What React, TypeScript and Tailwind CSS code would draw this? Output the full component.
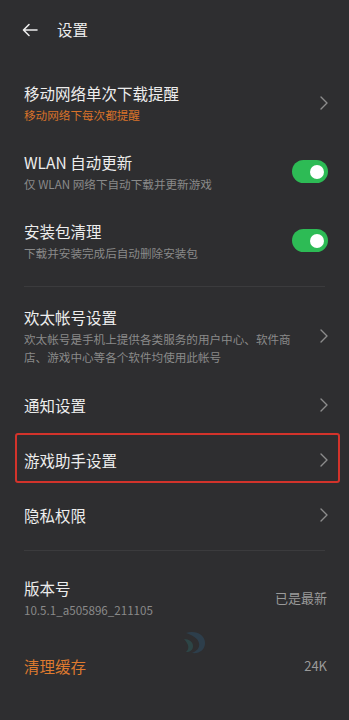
import React from "react";

const Chevron = () => (
  <svg width="10" height="16" viewBox="0 0 10 16" className="shrink-0">
    <path d="M2 2l6 6-6 6" fill="none" stroke="#8c8c8c" strokeWidth="1.4" strokeLinecap="round" strokeLinejoin="round" />
  </svg>
);

const Toggle = () => (
  <div className="w-[36px] h-[23px] rounded-full bg-[#2dbb55] flex items-center justify-end pr-[4px] shrink-0">
    <div className="w-[14px] h-[14px] rounded-full bg-white" />
  </div>
);

const Title = ({ children, orange }: { children: React.ReactNode; orange?: boolean }) => (
  <div className={`text-[15.5px] leading-[22px] ${orange ? "text-[#de7a2f]" : "text-[#ededed]"}`}>{children}</div>
);

const Sub = ({ children, orange }: { children: React.ReactNode; orange?: boolean }) => (
  <div className={`mt-[2px] text-[11.6px] leading-[18px] ${orange ? "text-[#d8722a]" : "text-[#8a8a8a]"}`}>{children}</div>
);

export default function App() {
  return (
    <div
      className="w-[349px] h-[720px] bg-[#2e2e30] overflow-hidden"
      style={{ fontFamily: '"Noto Sans CJK SC", "Noto Sans", sans-serif' }}
    >
      {/* header */}
      <div className="h-[60px] flex items-center pl-[22px]">
        <svg width="16" height="14" viewBox="0 0 16 14">
          <path d="M15 7H2M7 1.5L1.5 7 7 12.5" fill="none" stroke="#ececec" strokeWidth="1.6" strokeLinecap="round" strokeLinejoin="round" />
        </svg>
        <span className="ml-[19px] text-[15.5px] text-[#ececec]">设置</span>
      </div>

      <div className="mt-[8px]">
        <div className="h-[69px] flex items-center pl-[24px] pr-[20px]">
          <div className="flex-1">
            <Title>移动网络单次下载提醒</Title>
            <Sub orange>移动网络下每次都提醒</Sub>
          </div>
          <Chevron />
        </div>

        <div className="h-[69px] flex items-center pl-[24px] pr-[21px]">
          <div className="flex-1">
            <Title>WLAN 自动更新</Title>
            <Sub>仅 WLAN 网络下自动下载并更新游戏</Sub>
          </div>
          <Toggle />
        </div>

        <div className="h-[69px] flex items-center pl-[24px] pr-[21px]">
          <div className="flex-1">
            <Title>安装包清理</Title>
            <Sub>下载并安装完成后自动删除安装包</Sub>
          </div>
          <Toggle />
        </div>
      </div>

      <div className="mt-[11px] mx-[24px] h-px bg-[#3b3b3d]" />

      <div className="flex items-center pl-[24px] pr-[20px] pt-[19px] pb-[11px]">
        <div className="flex-1 pr-[20px]">
          <Title>欢太帐号设置</Title>
          <Sub>欢太帐号是手机上提供各类服务的用户中心、软件商店、游戏中心等各个软件均使用此帐号</Sub>
        </div>
        <Chevron />
      </div>

      <div className="h-[55px] flex items-center pl-[24px] pr-[20px]">
        <div className="flex-1">
          <Title>通知设置</Title>
        </div>
        <Chevron />
      </div>

      <div className="relative h-[55px] flex items-center pl-[24px] pr-[20px]">
        <div className="absolute left-[15px] right-[9px] top-[1px] bottom-[4px] border-2 border-[#d3332b] rounded-[3px]" />
        <div className="flex-1">
          <Title>游戏助手设置</Title>
        </div>
        <Chevron />
      </div>

      <div className="h-[55px] flex items-center pl-[24px] pr-[20px]">
        <div className="flex-1">
          <Title>隐私权限</Title>
        </div>
        <Chevron />
      </div>

      <div className="mt-[8px] mx-[24px] h-px bg-[#3b3b3d]" />

      <div className="relative h-[94px] flex items-center pl-[24px] pr-[22px]">
        <div className="flex-1">
          <Title>版本号</Title>
          <Sub>10.5.1_a505896_211105</Sub>
        </div>
        <span className="text-[13px] text-[#9a9a9a]">已是最新</span>
      </div>

      <div className="relative h-[42px] flex items-center pl-[24px] pr-[22px]">
        <svg className="absolute left-[180px] top-[-18px] opacity-20" width="30" height="30" viewBox="0 0 30 30">
          <path d="M6 6c10-3 19 2 19 10 0 7-6 11-13 10 5-2 8-5 7-10-1-5-7-8-13-10z" fill="#2a7fb8" />
          <path d="M4 12c5 0 9 3 9 7s-3 6-7 6c2-2 3-4 2-7-1-2-2-4-4-6z" fill="#2aa3a0" />
        </svg>
        <div className="flex-1">
          <Title orange>清理缓存</Title>
        </div>
        <span className="text-[13px] text-[#9a9a9a]">24K</span>
      </div>
    </div>
  );
}
